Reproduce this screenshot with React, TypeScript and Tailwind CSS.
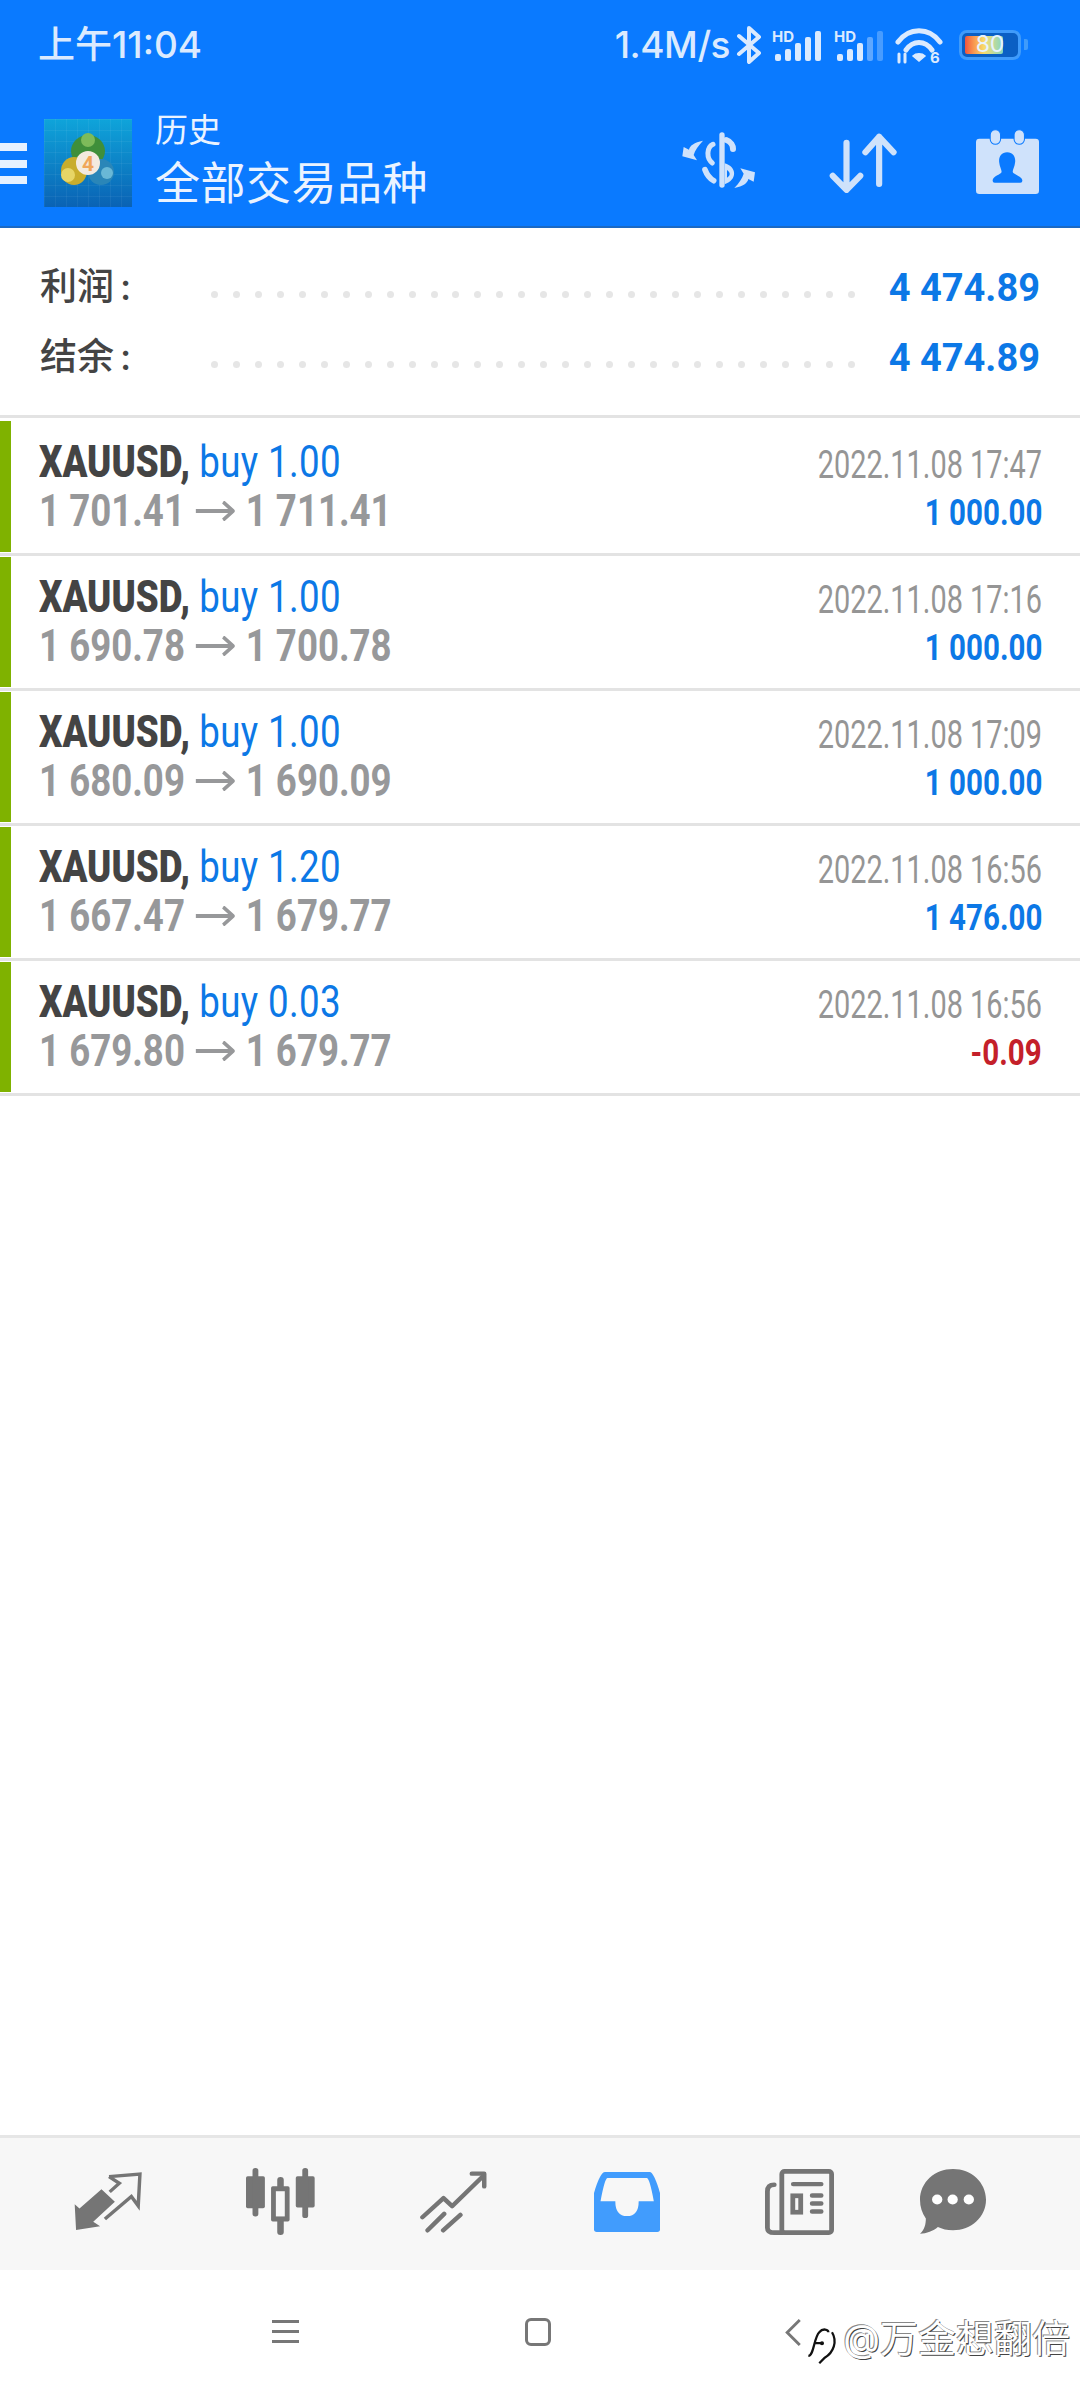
import React from 'react';

const cjk = "font-['Inter','Noto_Sans_CJK_SC',sans-serif]";

const trades = [
  { lots: 'buy 1.00', from: '1 701.41', to: '1 711.41', time: '2022.11.08 17:47', profit: '1 000.00', loss: false },
  { lots: 'buy 1.00', from: '1 690.78', to: '1 700.78', time: '2022.11.08 17:16', profit: '1 000.00', loss: false },
  { lots: 'buy 1.00', from: '1 680.09', to: '1 690.09', time: '2022.11.08 17:09', profit: '1 000.00', loss: false },
  { lots: 'buy 1.20', from: '1 667.47', to: '1 679.77', time: '2022.11.08 16:56', profit: '1 476.00', loss: false },
  { lots: 'buy 0.03', from: '1 679.80', to: '1 679.77', time: '2022.11.08 16:56', profit: '-0.09', loss: true },
];

function Signal({ faded }: { faded?: boolean }) {
  return (
    <svg viewBox="0 0 50 38" className="w-[50px] h-[38px]">
      <text x="0" y="15.5" fontSize="15" fontWeight="700" fill="#dbeafe" fontFamily="Inter, sans-serif">HD</text>
      <g fill="#dbeafe">
        <rect x="3" y="28" width="6" height="7" rx="2" />
        <rect x="13" y="23" width="6" height="12" rx="2" />
        <rect x="23" y="17" width="6" height="18" rx="2" />
        <rect x="33" y="11" width="6" height="24" rx="2" fillOpacity={faded ? 0.4 : 1} />
        <rect x="43" y="5" width="6" height="30" rx="2" fillOpacity={faded ? 0.3 : 1} />
      </g>
    </svg>
  );
}

function StatusBar() {
  return (
    <div className="h-[92px] flex items-center pl-[38px] pr-[52px] pb-[3px] text-[#dbeafe]">
      <span className={`${cjk} text-[37px] leading-[44px] font-medium whitespace-nowrap`}>上午11:04</span>
      <span className="ml-auto shrink-0 font-['Inter',sans-serif] text-[37px] leading-[44px] font-medium tracking-[-0.5px] whitespace-nowrap">1.4M/s</span>
      <svg viewBox="0 0 26 38" className="w-[26px] h-[38px] ml-[6px]" fill="none" stroke="#dbeafe" strokeWidth="4" strokeLinejoin="round" strokeLinecap="round">
        <path d="M3 10 L23 27 L13 36 V2 L23 11 L3 28" />
      </svg>
      <div className="ml-[10px]"><Signal /></div>
      <div className="ml-[12px]"><Signal faded /></div>
      <svg viewBox="0 0 48 38" className="w-[48px] h-[38px] ml-[11px]" fill="none" stroke="#dbeafe" strokeLinecap="round">
        <path d="M3 16 C14 1 34 1 45 16" strokeWidth="5" />
        <path d="M11 24 C18 14 30 14 37 24" strokeWidth="5" />
        <path d="M18 30 C21 27 27 27 30 30 L24 35 Z" fill="#dbeafe" strokeWidth="1.5" />
        <path d="M4 28 V36 M10 28 V36" strokeWidth="3" />
        <text x="35" y="37" fontSize="15" fontWeight="700" fill="#dbeafe" stroke="none" fontFamily="Inter, sans-serif">6</text>
      </svg>
      <div className="relative ml-[16px] w-[62px] h-[30px] rounded-[8px] border-[3px] border-[#3f9bfb] bg-[#0a5fc4] overflow-hidden">
        <div className="absolute left-[3px] top-[3px] bottom-[3px] w-[38px] rounded-[2px] bg-gradient-to-r from-[#f0533d] via-[#f7dc6a] to-[#7fd6c0]" />
        <span className="absolute inset-0 flex items-center justify-center font-['Inter',sans-serif] text-[23px] leading-none text-[#e8f3ff]">80</span>
      </div>
      <div className="ml-[3px] w-[4px] h-[11px] rounded-r-[2px] bg-[#3f9bfb]" />
    </div>
  );
}

function Mt4Logo() {
  return (
    <svg viewBox="0 0 88 88" className="w-[88px] h-[88px] ml-[17px]">
      <defs>
        <linearGradient id="logoBg" x1="0" y1="0" x2="0" y2="1">
          <stop offset="0" stopColor="#0fa4da" />
          <stop offset="1" stopColor="#0a62b4" />
        </linearGradient>
        <pattern id="logoGrid" width="11" height="11" patternUnits="userSpaceOnUse">
          <path d="M11 0 H0 V11" fill="none" stroke="#ffffff" strokeOpacity="0.1" />
        </pattern>
      </defs>
      <rect width="88" height="88" fill="url(#logoBg)" />
      <rect width="88" height="88" fill="url(#logoGrid)" />
      <ellipse cx="44" cy="32" rx="17" ry="16" fill="#3f8f3a" />
      <circle cx="44" cy="21" r="7" fill="#7dbb5a" />
      <ellipse cx="30" cy="52" rx="13" ry="14" fill="#c9ad2c" />
      <circle cx="24" cy="56" r="7" fill="#e7d566" />
      <ellipse cx="57" cy="53" rx="13" ry="13" fill="#2a86b8" />
      <circle cx="63" cy="54" r="6" fill="#69b8d6" />
      <circle cx="44" cy="44" r="12" fill="#f3eadf" />
      <text x="44" y="52" textAnchor="middle" fontSize="21" fontWeight="700" fill="#f0a65a" fontFamily="Roboto, sans-serif">4</text>
    </svg>
  );
}

function Toolbar() {
  return (
    <div className="h-[136px] flex items-start border-b-[2px] border-[#1b69c4]">
      <div className="mt-[51px] w-[27px] h-[41px] flex flex-col justify-between">
        <div className="h-[8px] bg-[#e6f1ff]" />
        <div className="h-[8px] bg-[#e6f1ff]" />
        <div className="h-[8px] bg-[#e6f1ff]" />
      </div>
      <div className="mt-[27px]"><Mt4Logo /></div>
      <div className={`${cjk} ml-[23px] mt-[16px] text-[#eaf3ff]`}>
        <div className="text-[33px] leading-[44px]">历史</div>
        <div className="mt-[3px] text-[45px] leading-[58px] tracking-[0.5px]">全部交易品种</div>
      </div>
      <div className="ml-auto mt-[37px] flex items-start pr-[41px]">
        <svg viewBox="0 0 270 210" className="w-[90px] h-[70px] -mt-[4px]" fill="#cfe2fb" stroke="none">
          <rect x="127" y="22" width="16" height="166" rx="8" />
          <path d="M148 45 C162 50 168 62 168 72" fill="none" stroke="#cfe2fb" strokeWidth="18" strokeLinecap="round" />
          <path d="M108 58 C88 68 88 100 106 114" fill="none" stroke="#cfe2fb" strokeWidth="15" strokeLinecap="round" />
          <path d="M84 134 C90 150 98 160 110 167" fill="none" stroke="#cfe2fb" strokeWidth="17" strokeLinecap="round" />
          <path d="M143 115 C180 125 182 165 143 178 Z M150 135 V158 C161 152 161 142 150 135 Z" fillRule="evenodd" />
          <path d="M78 47 C52 52 38 62 36 74 L20 66 L16 94 L60 106 L50 90 C54 76 64 62 78 47 Z" />
          <path d="M78 47 C52 52 38 62 36 74 L20 66 L16 94 L60 106 L50 90 C54 76 64 62 78 47 Z" transform="rotate(180 125 118)" />
        </svg>
        <svg viewBox="845 395 198 178" preserveAspectRatio="none" className="w-[68px] h-[60px] ml-[62px] mt-[4px]" fill="none" stroke="#cfe2fb" strokeWidth="18" strokeLinecap="round" strokeLinejoin="round">
          <path d="M896 424 V560 M856 522 L896 564 L936 522" />
          <path d="M991 546 V406 M951 452 L991 406 L1033 452" />
        </svg>
        <svg viewBox="1268 385 182 195" preserveAspectRatio="none" className="w-[63px] h-[65px] ml-[79px]">
          <path d="M1278 414 H1440 Q1450 414 1450 424 V570 Q1450 580 1440 580 H1278 Q1268 580 1268 570 V424 Q1268 414 1278 414 Z" fill="#cfe2fb" />
          <rect x="1309" y="387" width="30" height="44" rx="15" fill="#cfe2fb" stroke="#0a7aff" strokeWidth="3" />
          <rect x="1378" y="387" width="30" height="44" rx="15" fill="#cfe2fb" stroke="#0a7aff" strokeWidth="3" />
          <path d="M1358 455 C1375 455 1383 470 1381 485 C1380 498 1374 506 1374 514 C1376 522 1402 526 1402 540 Q1402 546 1396 546 H1322 Q1316 546 1316 540 C1316 526 1340 522 1342 514 C1342 506 1336 498 1335 485 C1333 470 1341 455 1358 455 Z" fill="#0a7aff" />
        </svg>
      </div>
    </div>
  );
}

function SummaryRow({ label, value }: { label: string; value: string }) {
  return (
    <div className="h-[70px] flex items-center pl-[40px] pr-[40px]">
      <span className={`${cjk} w-[171px] text-[#444] text-[37px] leading-none font-medium shrink-0`}>
        {label}
        <span className="ml-[6px]">:</span>
      </span>
      <div className="w-[644px] flex justify-between mt-[16px] shrink-0">
        {Array.from({ length: 30 }).map((_, i) => (
          <span key={i} className="w-[7px] h-[7px] rounded-full bg-[#e6e6e6]" />
        ))}
      </div>
      <span className="ml-auto mt-[3px] font-['Roboto',sans-serif] font-bold text-[38px] leading-none text-[#0c78e6]">{value}</span>
    </div>
  );
}

function TradeRow({ t, first }: { t: (typeof trades)[number]; first: boolean }) {
  return (
    <div className={`${first ? 'h-[138px]' : 'h-[135px]'} flex border-b-[3px] border-[#e3e3e3] font-['Roboto',sans-serif]`}>
      <div className={`w-[11px] ${first ? 'mt-[3px]' : 'mt-[1px]'} mb-[1px] bg-[#7fb200]`} />
      <div className={`flex-1 pl-[28px] pr-[38px] ${first ? 'pt-[19px]' : 'pt-[16px]'} flex justify-between`}>
        <div>
          <div className="h-[50px] flex items-center origin-left scale-x-[0.833] whitespace-nowrap text-[44px] leading-none">
            <span className="font-black text-[#444]">XAUUSD,</span>
            <span className="ml-[11px] tracking-[0.45px] text-[#0c78e6]">{t.lots}</span>
          </div>
          <div className="h-[48px] flex items-center origin-left scale-x-[0.833] whitespace-nowrap text-[44px] leading-none font-bold text-[#97989a]">
            {t.from}
            <svg viewBox="0 0 47 20" className="w-[47px] h-[20px] mx-[13px]" fill="none" stroke="#97989a" strokeWidth="4">
              <path d="M0 10 H44 M33 1 L45 10 L33 19" />
            </svg>
            {t.to}
          </div>
        </div>
        <div className="flex flex-col items-end pt-[4px]">
          <div className="h-[48px] flex items-center origin-right scale-x-[0.76] whitespace-nowrap text-[38px] leading-none text-[#959595]">{t.time}</div>
          <div className={`h-[48px] flex items-center origin-right scale-x-[0.82] whitespace-nowrap text-[36px] leading-none font-bold ${t.loss ? 'text-[#c4202a]' : 'text-[#0c78e6]'}`}>{t.profit}</div>
        </div>
      </div>
    </div>
  );
}

function TabBar() {
  return (
    <div className="h-[135px] bg-[#f7f7f7] border-t-[3px] border-[#e6e6e6] flex items-center pl-[21px] pb-[5px]">
      <div className="w-[173px] flex items-center justify-center">
        <svg viewBox="216 158 198 178" preserveAspectRatio="none" className="w-[68px] h-[59px]" fill="none" stroke="#757575">
          <path d="M218 255 L232 268 L296 210 L335 248 L272 308 L292 322 L222 333 Z" fill="#757575" stroke="none" />
          <path d="M318 172 L408 164 L403 260 L383 232 L306 300" strokeWidth="10" />
          <path d="M320 218 L348 192 L318 172" strokeWidth="10" />
        </svg>
      </div>
      <div className="w-[173px] flex items-center justify-center">
        <svg viewBox="716 145 201 202" preserveAspectRatio="none" className="w-[69px] h-[67px]" fill="#757575">
          <rect x="716" y="170" width="55" height="96" rx="5" />
          <rect x="735" y="145" width="17" height="146" rx="8" />
          <rect x="861" y="170" width="55" height="94" rx="5" />
          <rect x="880" y="145" width="17" height="151" rx="8" />
          <rect x="807" y="172" width="19" height="175" rx="9" />
          <rect x="789" y="200" width="54" height="106" rx="5" />
          <rect x="803" y="215" width="26" height="76" fill="#f7f7f7" />
        </svg>
      </div>
      <div className="w-[173px] flex items-center justify-center">
        <svg viewBox="1222 150 194 185" preserveAspectRatio="none" className="w-[67px] h-[62px]" fill="none" stroke="#757575" strokeWidth="13" strokeLinecap="round" strokeLinejoin="round">
          <path d="M1229 288 L1290 231 L1315 255 L1405 165" />
          <path d="M1372 158 H1408 V196" />
          <path d="M1244 327 L1292 278 M1289 327 L1339 281" />
        </svg>
      </div>
      <div className="w-[173px] flex items-center justify-center">
        <svg viewBox="158 152 192 181" preserveAspectRatio="none" className="w-[66px] h-[60px]">
          <path d="M190 152 H320 Q332 152 350 215 V325 Q350 333 342 333 H166 Q158 333 158 325 V215 Q176 152 190 152 Z" fill="#419cfd" />
          <path d="M197 170 H312 Q320 172 332 240 H288 Q288 285 254 285 Q220 285 220 240 H177 Q189 172 197 170 Z" fill="#f7f7f7" />
        </svg>
      </div>
      <div className="w-[173px] flex items-center justify-center">
        <svg viewBox="657 145 201 197" preserveAspectRatio="none" className="w-[69px] h-[66px]" fill="none" stroke="#757575" strokeLinecap="round">
          <rect x="706" y="152" width="145" height="183" rx="8" strokeWidth="14" />
          <path d="M684 192 Q664 192 664 212 V320 Q664 335 684 335 H710" strokeWidth="14" />
          <path d="M739 190 H821 M794 224 H821 M794 248 H821 M794 272 H821" strokeWidth="13" />
          <rect x="738" y="225" width="23" height="49" strokeWidth="14" />
        </svg>
      </div>
      <div className="w-[134px] flex items-center justify-center">
        <svg viewBox="1103 145 192 196" preserveAspectRatio="none" className="w-[66px] h-[65px]">
          <path d="M1199 145 C1252 145 1295 185 1295 238 C1295 290 1252 330 1199 330 C1182 330 1167 326 1155 320 C1142 332 1122 340 1103 340 C1116 328 1120 312 1120 294 C1109 279 1103 259 1103 238 C1103 185 1146 145 1199 145 Z" fill="#757575" />
          <circle cx="1153" cy="237" r="15" fill="#fff" />
          <circle cx="1198" cy="237" r="15" fill="#fff" />
          <circle cx="1245" cy="237" r="15" fill="#fff" />
        </svg>
      </div>
    </div>
  );
}

function SystemNav() {
  return (
    <div className="relative h-[130px] flex items-start pt-[48px]">
      <div className="ml-[272px] mt-[2px] w-[27px] h-[23px] flex flex-col justify-between">
        <div className="h-[3px] bg-[#777]" />
        <div className="h-[3px] bg-[#777]" />
        <div className="h-[3px] bg-[#777]" />
      </div>
      <div className="ml-[226px] w-[26px] h-[28px] rounded-[6px] border-[3px] border-[#777]" />
      <svg viewBox="0 0 18 30" className="ml-[233px] w-[18px] h-[29px]" fill="none" stroke="#777" strokeWidth="3">
        <path d="M16 2 L3 15 L16 28" />
      </svg>
      <div className="absolute right-[10px] top-[49px] flex items-start gap-[4px]">
        <svg viewBox="0 0 34 44" className="w-[34px] h-[40px] mt-[6px]" fill="none" stroke="#111" strokeWidth="2.5">
          <path d="M2 34 C8 34 8 14 14 8 C18 3 24 5 24 8 M8 20 H18 M28 8 C34 18 30 30 20 36 L14 42" />
          <circle cx="17" cy="20" r="1" fill="#111" />
        </svg>
        <span className={`${cjk} text-[38px] leading-none text-white [text-shadow:1px_1px_0_#444,-1px_-1px_0_#888]`}>@万金想翻倍</span>
      </div>
    </div>
  );
}

export default function App() {
  return (
    <div className="w-[1080px] h-[2400px] bg-white flex flex-col overflow-hidden">
      <div className="bg-[#0a7aff]">
        <StatusBar />
        <Toolbar />
      </div>
      <div className="pt-[23px] pb-[24px]">
        <SummaryRow label="利润" value="4 474.89" />
        <SummaryRow label="结余" value="4 474.89" />
      </div>
      <div className="border-t-[3px] border-[#e3e3e3]">
        {trades.map((t, i) => (
          <TradeRow key={i} t={t} first={i === 0} />
        ))}
      </div>
      <div className="flex-1" />
      <TabBar />
      <SystemNav />
    </div>
  );
}
